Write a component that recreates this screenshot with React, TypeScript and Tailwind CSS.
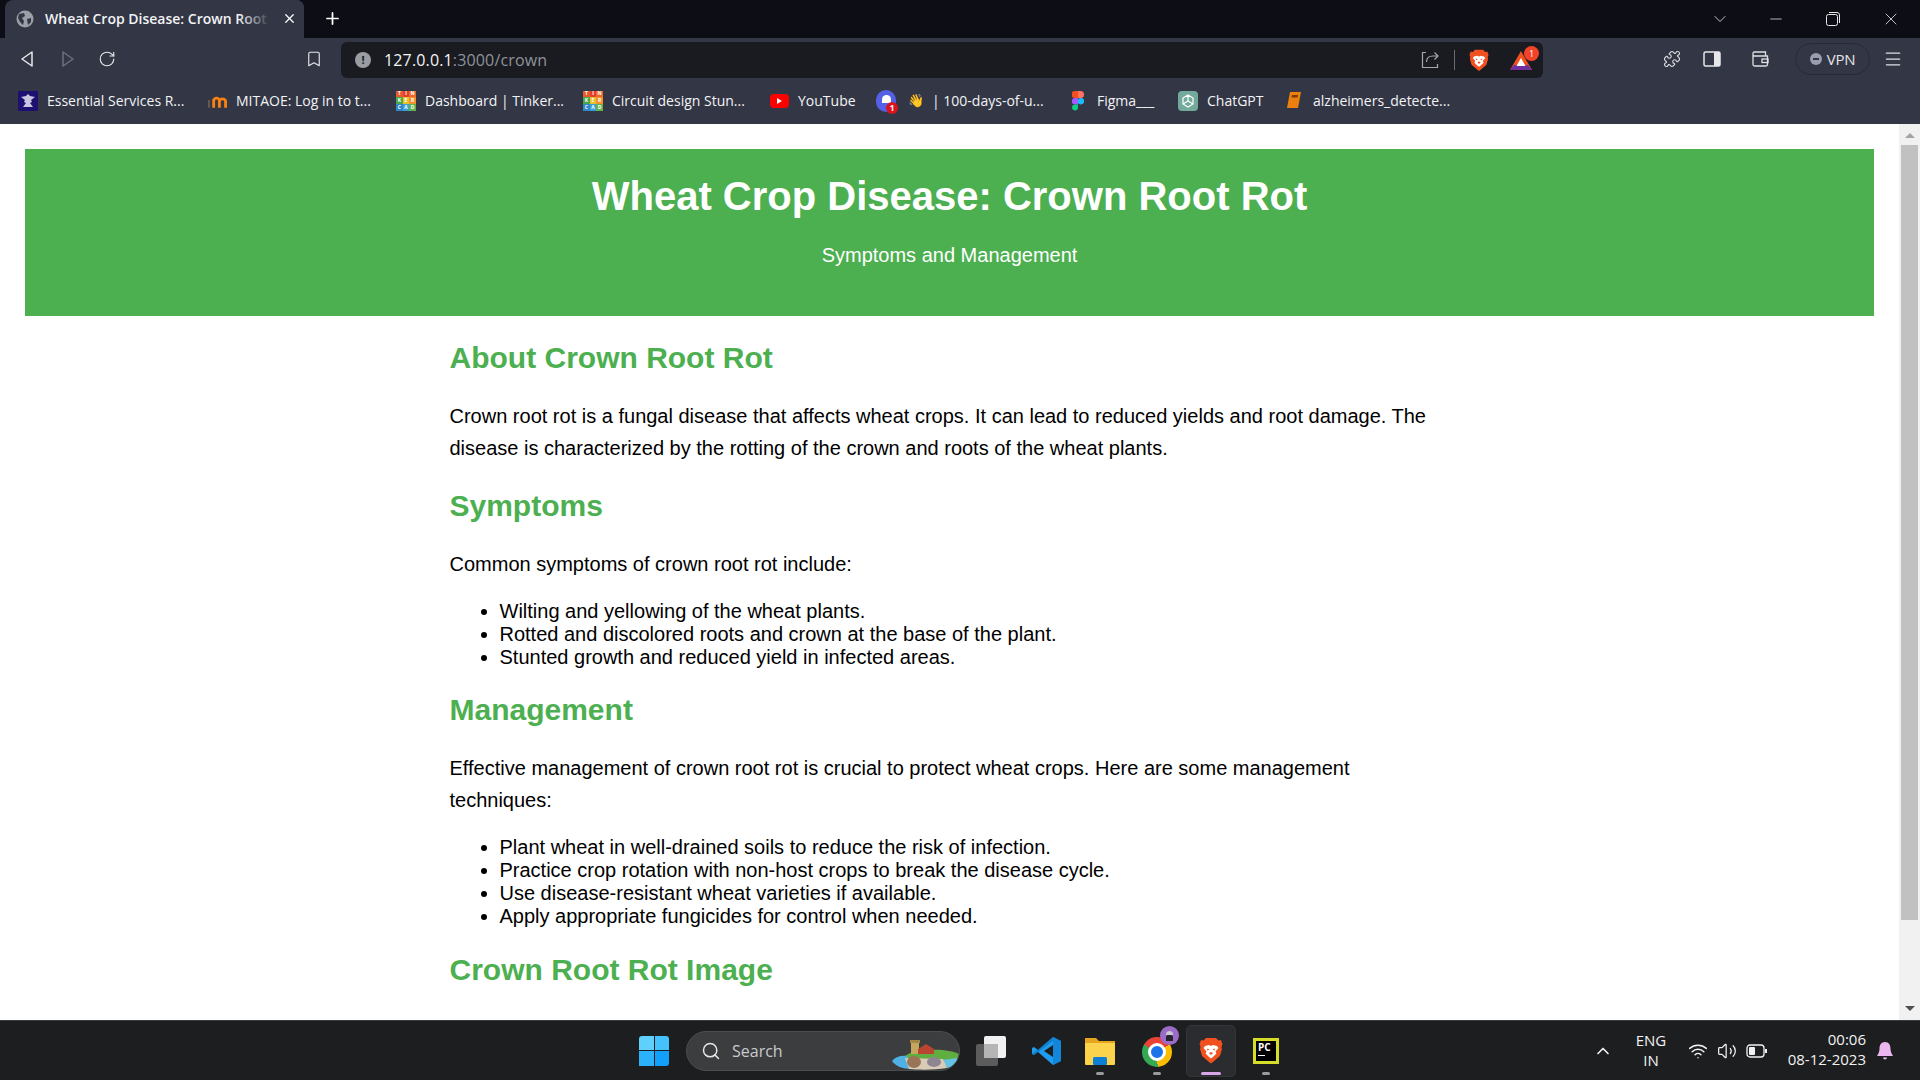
import React from "react";
import { Plus, X, Minus, ChevronDown, RotateCw, Bookmark, Menu, Puzzle, Search, ChevronUp, Volume2, Wifi } from "lucide-react";

// Brave lion shield
function BraveIcon({ size = 20 }: { size?: number }) {
  return (
    <svg width={size} height={size * 1.12} viewBox="0 0 24 27">
      <path d="M7 1 L17 1 L19.500 3.500 L22 3 L23.500 7 L22.500 10 L23 12 L21 19 L14 25 L12 26.500 L10 25 L3 19 L1 12 L1.500 10 L.5 7 L2 3 L4.500 3.500Z" fill="#f1501f" />
      <path d="M6 9 L10 8 L12 9 L14 8 L18 9 L19.500 11 L16.500 14.500 L17.500 16.500 L14.500 19.500 L12 21.500 L9.500 19.500 L6.500 16.500 L7.500 14.500 L4.500 11Z" fill="#fff" />
      <path d="M8 11.500 L10.500 12.500 L8.500 13.500Z M16 11.500 L13.500 12.500 L15.500 13.500Z M10 16 L12 15 L14 16 L12 18Z" fill="#f1501f" />
    </svg>
  );
}

// Tinkercad favicon: letters on coloured squares
function TinkerFavicon() {
  const cells = [
    ["T", "#e8592b"], ["I", "#e23f2e"], ["N", "#ee6a2c"],
    ["K", "#4aa84a"], ["E", "#e9c02c"], ["R", "#f0912c"],
    ["C", "#2f86c9"], ["A", "#3a9fd8"], ["D", "#63b04c"],
  ];
  return (
    <div className="grid grid-cols-3 w-[20px] h-[20px]">
      {cells.map(([l, c], i) => (
        <span key={i} className="flex items-center justify-center text-[5px] font-bold leading-none text-white" style={{ background: c }}>
          {l}
        </span>
      ))}
    </div>
  );
}

function BookmarkItem({ w, icon, label }: { w: string; icon: React.ReactNode; label: string }) {
  return (
    <div className={`flex items-center shrink-0 ${w}`}>
      <span className="w-[20px] flex justify-center shrink-0">{icon}</span>
      <span className="ml-[9px] whitespace-nowrap">{label}</span>
    </div>
  );
}

function BrowserChrome() {
  return (
    <div className="shrink-0 text-[#f2f3f5] font-['Open_Sans','Noto_Sans',sans-serif]">
      {/* Tab strip */}
      <div className="h-[38px] bg-[#0c0d15] flex items-end pl-[5px]">
        <div className="w-[299px] h-[38px] bg-[#333645] rounded-t-[8px] flex items-center pl-[11px] relative overflow-hidden">
          <svg width="18" height="18" viewBox="0 0 18 18" className="shrink-0">
            <circle cx="9" cy="9" r="8.500" fill="#9aa0a6" />
            <path d="M3 4 L8 3 L9 6 L6 8 L8 11 L7 15 L4 12 L2 8 Z M11 9 L15 8 L15 12 L12 15 Z" fill="#333645" />
          </svg>
          <span className="ml-[11px] mb-[2px] text-[14px] font-semibold whitespace-nowrap">Wheat Crop Disease: Crown Root Rot</span>
          <div className="absolute right-0 top-0 h-full w-[66px] bg-gradient-to-r from-transparent via-[#333645] via-50% to-[#333645]" />
          <X className="absolute right-[7px] top-[11px] text-white" size={15} strokeWidth={2} />
        </div>
        <Plus className="ml-[19px] mb-[10px] text-white" size={19} strokeWidth={2.200} />
        <div className="ml-auto flex items-center h-[38px] text-[#e8e8ea]">
          <ChevronDown size={20} strokeWidth={1} />
          <div className="w-[36px]" />
          <Minus size={18} strokeWidth={1} className="mx-[1px]" />
          <div className="w-[40px]" />
          <svg width="14" height="14" viewBox="0 0 14 14" fill="none" stroke="currentColor">
            <rect x="0.500" y="2.500" width="11" height="11" rx="2" />
            <path d="M3 .5 H11 A2.500 2.500 0 0 1 13.500 3 V11" />
          </svg>
          <div className="w-[41px]" />
          <X size={20} strokeWidth={1} />
          <div className="w-[19px]" />
        </div>
      </div>
      {/* Toolbar */}
      <div className="h-[42px] bg-[#333645] flex items-center">
        <div className="w-[341px] h-full flex items-center pl-[19px] relative">
          <svg width="16" height="18" viewBox="0 0 16 18" fill="none" stroke="#e8e8ea" strokeWidth="1.500" strokeLinejoin="round">
            <path d="M13 2 L3 9 L13 16 Z" />
          </svg>
          <svg className="ml-[25px]" width="16" height="18" viewBox="0 0 16 18" fill="none" stroke="#6c6f7c" strokeWidth="1.500" strokeLinejoin="round">
            <path d="M3 2 L13 9 L3 16 Z" />
          </svg>
          <RotateCw className="ml-[22px] text-[#e8e8ea]" size={18} strokeWidth={1.500} />
          <Bookmark className="absolute left-[305px] top-[12px] text-[#e8e8ea]" size={18} strokeWidth={1.500} />
        </div>
        {/* Address bar */}
        <div className="w-[1202px] h-[36px] bg-[#191b21] rounded-[6px] flex items-center pl-[14px] mt-[2px]">
          <span className="w-4 h-4 rounded-full bg-[#9a9ca3] text-[#191b21] text-[11px] font-bold flex items-center justify-center">!</span>
          <span className="ml-[13px] text-[16px] tracking-[0.15px]">127.0.0.1<span className="text-[#8f929a]">:3000/crown</span></span>
          <div className="ml-auto flex items-center">
            <svg width="18" height="18" viewBox="0 0 18 18" fill="none" stroke="#a5a7ad" strokeWidth="1.200">
              <path d="M5 1.500 H1.500 V16.500 H16.500 V13" />
              <path d="M5.500 11 C5.500 7 8 5 12 5 H17 M13.500 1.500 L17 5 L13.500 8.500" />
            </svg>
            <div className="w-px h-5 bg-[#6b6d75] ml-[15px]" />
            <div className="ml-[14px] flex"><BraveIcon size={20} /></div>
            <div className="relative ml-[20px] mr-[10px] w-[24px] h-[24px]">
              <svg width="24" height="22" viewBox="0 0 24 22" className="mt-[2px]">
                <path d="M12 1 L23 20 H1 Z" fill="#f1501f" />
                <path d="M1 20 L5 15 H19 L23 20 Z" fill="#6f2f9c" />
                <path d="M12 8 L16.500 16 H7.500 Z" fill="#fff" />
              </svg>
              <span className="absolute -top-[2px] -right-[6px] w-[15px] h-[15px] rounded-full bg-[#f0432a] text-white text-[9px] flex items-center justify-center">1</span>
            </div>
          </div>
        </div>
        <Puzzle className="ml-[120px] text-[#dfe0e3]" size={18} strokeWidth={1.500} />
        <svg className="ml-[22px]" width="18" height="18" viewBox="0 0 18 18" fill="none">
          <rect x="1" y="2" width="16" height="14" rx="1.500" stroke="#e8e8ea" strokeWidth="1.500" />
          <rect x="11" y="2" width="6" height="14" fill="#e8e8ea" />
        </svg>
        <svg className="ml-[30px]" width="18" height="18" viewBox="0 0 18 18" fill="none" stroke="#dfe0e3" strokeWidth="1.300">
          <path d="M2 4 V14.500 A1.500 1.500 0 0 0 3.500 16 H15 A1.500 1.500 0 0 0 16.500 14.500 V6 H3.500 A1.500 1.500 0 0 1 2 4 A1.500 1.500 0 0 1 3.500 2 H14.500 V6" />
          <rect x="11" y="9" width="6" height="3.500" />
        </svg>
        <div className="ml-[26px] w-[75px] h-[32px] rounded-full border border-[#282a36] flex items-center justify-center text-[15px] text-[#e4e5e8] tracking-[-0.2px]">
          <span className="w-3 h-3 rounded-full bg-[#9a9dae] mr-[5px] flex items-center justify-center"><span className="w-[6px] h-[2px] bg-[#333645]" /></span>
          VPN
        </div>
        <Menu className="ml-[13px] text-[#dfe0e3]" size={20} strokeWidth={1.500} />
      </div>
      {/* Bookmarks bar */}
      <div className="h-[44px] bg-[#333645] flex items-center pl-[18px] pb-[3px] text-[14px]">
        <BookmarkItem w="w-[189px]" label="Essential Services R..." icon={
          <span className="w-[20px] h-[20px] bg-[#1e1070] flex items-center justify-center">
            <svg width="16" height="16" viewBox="0 0 16 16" fill="#c9c5e0">
              <path d="M1 4 L6 3 L8 1 L10 3 L15 4 L11 7 L12 9 L10 10 L13 14 H3 L6 10 L4 9 L5 7Z" />
            </svg>
          </span>
        } />
        <BookmarkItem w="w-[189px]" label="MITAOE: Log in to t..." icon={
          <svg width="21" height="14" viewBox="0 0 21 14" fill="none" strokeWidth="3">
            <path d="M2 14 V6" stroke="#6b5a4c" strokeWidth="2" />
            <path d="M7 14 V5 M13 14 V7 A3 3 0 0 0 7 7" stroke="#f98012" />
            <path d="M13 7 A3.500 3.500 0 0 1 19.500 7 V14" stroke="#f98012" />
          </svg>
        } />
        <BookmarkItem w="w-[187px]" label="Dashboard | Tinker..." icon={<TinkerFavicon />} />
        <BookmarkItem w="w-[186px]" label="Circuit design Stun..." icon={<TinkerFavicon />} />
        <BookmarkItem w="w-[107px]" label="YouTube" icon={
          <span className="w-[19px] h-[14px] bg-[#f00] rounded-[4px] flex items-center justify-center">
            <span className="w-0 h-0 border-y-[3px] border-y-transparent border-l-[5px] border-l-white" />
          </span>
        } />
        <span className="w-[20px] h-[22px] rounded-full bg-[#5460e6] relative shrink-0 flex items-center justify-center">
          <span className="w-[9px] h-[8px] rounded-t-full bg-white mb-[3px]" />
          <span className="absolute right-[-2px] bottom-[-2px] w-[12px] h-[12px] rounded-full bg-[#d8131c] text-[9px] font-bold flex items-center justify-center">1</span>
        </span>
        <div className="w-[160px] flex items-center shrink-0 ml-[12px] whitespace-nowrap">
          <span className="text-[13px] w-[24px]">👋</span>| 100-days-of-u...
        </div>
        <BookmarkItem w="w-[110px]" label="Figma___" icon={
          <svg width="12" height="20" viewBox="0 0 12 20">
            <path d="M3 0 H6 V7 H3 A3.500 3.500 0 0 1 3 0Z" fill="#f24e1e" />
            <path d="M6 0 H8.500 A3.500 3.500 0 0 1 8.500 7 H6Z" fill="#ff7262" />
            <path d="M3 7 H6 V13.500 H3 A3.250 3.250 0 0 1 3 7Z" fill="#a259ff" />
            <circle cx="9" cy="10.200" r="3.200" fill="#1abcfe" />
            <path d="M3 13.500 H6 V17 A3 3 0 1 1 3 13.500Z" fill="#0acf83" />
          </svg>
        } />
        <BookmarkItem w="w-[106px]" label="ChatGPT" icon={
          <span className="w-[20px] h-[20px] rounded-[4px] bg-[#74aa9c] flex items-center justify-center">
            <svg width="14" height="14" viewBox="0 0 14 14" fill="none" stroke="#fff" strokeWidth="1.200"><path d="M7 1 L12 4 V10 L7 13 L2 10 V4 Z M7 1 V7 L12 10 M7 7 L2 10" /></svg>
          </span>
        } />
        <BookmarkItem w="w-[170px]" label="alzheimers_detecte..." icon={
          <svg width="16" height="19" viewBox="0 0 16 19">
            <path d="M4 1 H15 L12 17 H1 Z" fill="#ec7f0e" />
            <path d="M6 4 H12 L11.500 6.500 H5.500Z" fill="#7a3c02" />
          </svg>
        } />
      </div>
    </div>
  );
}

function PageContent() {
  const h2 = "text-[30px] font-bold leading-[34px] text-[#4caf50]";
  return (
    <div className="flex-1 min-h-0 flex bg-white font-['Liberation_Sans',Arial,sans-serif] text-black overflow-hidden">
      <div className="flex-1 min-w-0 px-[25px] pt-[25px]">
        <header className="h-[167px] bg-[#4caf50] text-white text-center pt-[24px]">
          <h1 className="text-[40px] font-bold leading-[46px]">Wheat Crop Disease: Crown Root Rot</h1>
          <p className="text-[20px] leading-[23px] mt-[25px]">Symptoms and Management</p>
        </header>
        <main className="w-[1000px] mx-auto">
          <h2 className={`${h2} mt-[25px]`}>About Crown Root Rot</h2>
          <p className="text-[20px] leading-[32px] mt-[25px]">
            Crown root rot is a fungal disease that affects wheat crops. It can lead to reduced yields and root damage. The disease is characterized by the rotting of the crown and roots of the wheat plants.
          </p>
          <h2 className={`${h2} mt-[25px]`}>Symptoms</h2>
          <p className="text-[20px] leading-[32px] mt-[25px]">Common symptoms of crown root rot include:</p>
          <ul className="list-disc pl-[50px] text-[20px] leading-[23px] mt-[20px]">
            <li>Wilting and yellowing of the wheat plants.</li>
            <li>Rotted and discolored roots and crown at the base of the plant.</li>
            <li>Stunted growth and reduced yield in infected areas.</li>
          </ul>
          <h2 className={`${h2} mt-[24px]`}>Management</h2>
          <p className="text-[20px] leading-[32px] mt-[25px]">
            Effective management of crown root rot is crucial to protect wheat crops. Here are some management techniques:
          </p>
          <ul className="list-disc pl-[50px] text-[20px] leading-[23px] mt-[20px]">
            <li>Plant wheat in well-drained soils to reduce the risk of infection.</li>
            <li>Practice crop rotation with non-host crops to break the disease cycle.</li>
            <li>Use disease-resistant wheat varieties if available.</li>
            <li>Apply appropriate fungicides for control when needed.</li>
          </ul>
          <h2 className={`${h2} mt-[25px]`}>Crown Root Rot Image</h2>
        </main>
      </div>
      {/* Scrollbar */}
      <div className="w-[21px] shrink-0 bg-[#f1f1f1] flex flex-col items-center">
        <span className="mt-[9px] w-0 h-0 border-x-[5px] border-x-transparent border-b-[5px] border-b-[#a3a3a3]" />
        <div className="mt-[7px] w-[17px] h-[775px] bg-[#c1c1c1]" />
        <span className="mt-auto mb-[9px] w-0 h-0 border-x-[5px] border-x-transparent border-t-[5px] border-t-[#505050]" />
      </div>
    </div>
  );
}

function TaskSlot({ w, dot, children }: { w: string; dot?: string; children: React.ReactNode }) {
  return (
    <div className={`relative h-[52px] flex items-center justify-center shrink-0 ${w}`}>
      {children}
      {dot && <span className={`absolute bottom-[2px] left-1/2 -translate-x-1/2 h-[3px] rounded-full ${dot}`} />}
    </div>
  );
}

function Taskbar() {
  return (
    <div className="h-[60px] shrink-0 bg-[#1c1e20] border-t border-[#3a3b3d] flex items-center relative text-white font-['Open_Sans','Noto_Sans',sans-serif]">
      <div className="w-[639px] shrink-0" />
      {/* Start */}
      <div className="w-[30px] h-[30px] grid grid-cols-2 gap-[1px] shrink-0">
        <span className="bg-[#5fd0fb] rounded-tl-[3px]" />
        <span className="bg-[#45c2fb] rounded-tr-[3px]" />
        <span className="bg-[#2cb2fb]" />
        <span className="bg-[#12a0fb] rounded-br-[3px]" />
      </div>
      {/* Search box */}
      <div className="ml-[17px] w-[274px] h-[40px] rounded-full bg-[#3b3d3f] border border-[#4b4d4f] flex items-center pl-[14px] relative overflow-hidden">
        <Search size={20} strokeWidth={1.800} className="text-[#e5e5e5]" />
        <span className="ml-[11px] text-[16px] text-[#c9cacb]">Search</span>
        <svg className="absolute right-0 top-0" width="70" height="40" viewBox="0 0 70 40">
          <path d="M13 27 C20 19 30 18 40 18 C52 17 64 19 70 22 L68 30 L30 32 Z" fill="#5fae3f" />
          <path d="M3 29 C6 25 12 23 18 24 L22 37 C14 37 6 34 3 29Z" fill="#4fb0e4" />
          <path d="M53 28 L68 26 C69 31 65 35 58 36Z" fill="#66c3e6" />
          <path d="M16 26 L54 27 L58 36 C46 38 30 38 20 37Z" fill="#d9cbb6" />
          <rect x="22" y="10" width="8" height="12" fill="#c5a75d" />
          <rect x="21" y="8" width="10" height="3" fill="#a58745" />
          <path d="M29 17 L37 12 L45 17 V22 H29Z" fill="#b8452f" />
          <ellipse cx="25" cy="30" rx="7" ry="6" fill="#9a7457" />
          <ellipse cx="45" cy="30" rx="7" ry="5" fill="#8d8590" />
        </svg>
      </div>
      <TaskSlot w="w-[62px]">
        <div className="relative w-[30px] h-[30px]">
          <span className="absolute left-0 bottom-0 w-[22px] h-[22px] bg-[#5c5c5c] rounded-[2px]" />
          <span className="absolute right-0 top-0 w-[22px] h-[22px] bg-[#f1f1f1] rounded-[2px]" />
          <span className="absolute left-[8px] top-[8px] w-[14px] h-[14px] bg-[#b5b5b5]" />
        </div>
      </TaskSlot>
      <TaskSlot w="w-[50px]">
        <svg width="30" height="30" viewBox="0 0 30 30">
          <path d="M21 1 L29 5 V25 L21 29 L6 16 L2 19 L0 18 V12 L2 11 L6 14 Z M21 9 L12 15 L21 21 Z" fill="#1f9cf0" />
          <path d="M21 1 L29 5 V25 L21 29 Z" fill="#0d7fd0" fillOpacity="0.700" />
          <path d="M0 18 L2 19 L21 5 V1 Z" fill="#0065a9" fillOpacity="0.500" />
        </svg>
      </TaskSlot>
      <TaskSlot w="w-[56px]" dot="w-[8px] bg-[#9a9a9a]">
        <svg width="30" height="30" viewBox="0 0 30 30">
          <path d="M0 2 H11 L14 5 H30 V10 H0Z" fill="#e5a51c" />
          <rect y="7" width="30" height="22" rx="1" fill="#fcd34d" />
          <rect x="8" y="21" width="14" height="8" rx="1.500" fill="#0f7fd6" />
        </svg>
      </TaskSlot>
      <TaskSlot w="w-[58px]" dot="w-[8px] bg-[#9a9a9a]">
        <div className="relative mt-[3px]">
          <div className="w-[30px] h-[30px] rounded-full bg-[conic-gradient(from_-60deg,#ea4335_0_33%,#fbbc04_33%_66%,#34a853_66%_100%)] flex items-center justify-center">
            <span className="w-[12px] h-[12px] rounded-full bg-[#1a73e8] border-[3px] border-white box-content" />
          </div>
          <span className="absolute -top-[11px] -right-[7px] w-[19px] h-[19px] rounded-full bg-[#9c6bc7] flex flex-col items-center justify-center">
            <span className="w-[7px] h-[4px] bg-[#c9c9cf] rounded-t-full" />
            <span className="w-[7px] h-[6px] bg-[#24242a] rounded-t-[2px]" />
          </span>
        </div>
      </TaskSlot>
      <TaskSlot w="w-[50px]">
        <div className="absolute inset-0 bg-[#2a2c2f] rounded-[5px] border border-[#333537]" />
        <div className="relative flex"><BraveIcon size={24} /></div>
        <span className="absolute bottom-[2px] left-1/2 -translate-x-1/2 w-[20px] h-[3px] rounded-full bg-[#d9a6e8]" />
      </TaskSlot>
      <TaskSlot w="w-[60px]" dot="w-[8px] bg-[#9a9a9a]">
        <div className="w-[26px] h-[26px] bg-black border-[3px] border-[#d5dd28] flex flex-col pl-[2px] pt-[1px]">
          <span className="text-[10px] font-bold leading-[11px] text-white">PC</span>
          <span className="w-[7px] h-[1px] bg-white mt-[2px]" />
        </div>
      </TaskSlot>
      {/* Tray */}
      <div className="absolute right-0 top-0 h-full flex items-center text-[#f2f2f2]">
        <ChevronUp size={20} strokeWidth={2} />
        <div className="ml-[20px] mb-[2px] w-[36px] text-center text-[15px] leading-[20px]">ENG<br />IN</div>
        <Wifi className="ml-[19px]" size={20} strokeWidth={1.800} />
        <Volume2 className="ml-[9px]" size={20} strokeWidth={1.500} />
        <svg className="ml-[9px]" width="22" height="14" viewBox="0 0 22 14" fill="none">
          <rect x="1" y="1" width="17" height="12" rx="3" stroke="#f2f2f2" strokeWidth="1.300" />
          <rect x="3" y="3" width="6" height="8" rx="1" fill="#f2f2f2" />
          <rect x="19" y="5" width="2" height="4" fill="#f2f2f2" />
        </svg>
        <div className="ml-[14px] mb-[3px] text-right text-[15px] leading-[20px] w-[84px] whitespace-nowrap">00:06<br />08-12-2023</div>
        <svg className="ml-[11px] mr-[27px]" width="16" height="20" viewBox="0 0 16 20">
          <path d="M8 1 C12 1 13.500 4 13.500 8 C13.500 11 15 13 16 15 H0 C1 13 2.500 11 2.500 8 C2.500 4 4 1 8 1Z M6 16.500 H10 A2 2 0 0 1 6 16.500Z" fill="#ecb7f0" />
        </svg>
      </div>
    </div>
  );
}

export default function App() {
  return (
    <div className="h-screen w-screen flex flex-col overflow-hidden bg-white">
      <BrowserChrome />
      <PageContent />
      <Taskbar />
    </div>
  );
}
